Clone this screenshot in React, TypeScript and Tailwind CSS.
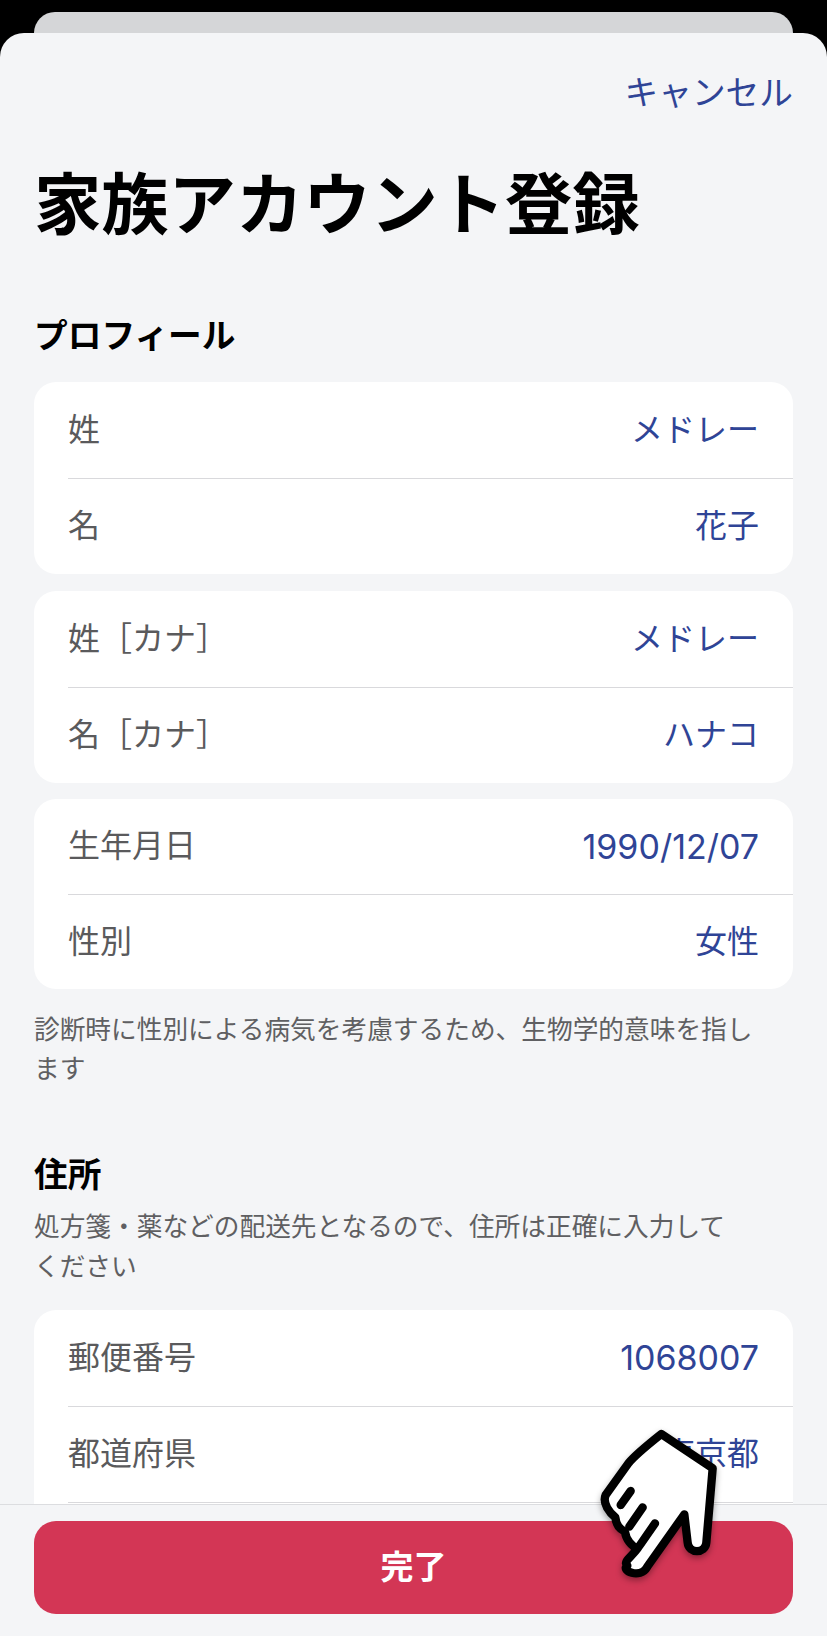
import { Fragment } from 'react';

const sans = 'font-["Inter","Noto_Sans_CJK_JP",sans-serif]';

type Row = { label: string; value: string };

function Card({ rows, rowH = 'h-[95.5px]', more = false }: { rows: Row[]; rowH?: string; more?: boolean }) {
    return (
        <div className="rounded-[22px] bg-white">
            {rows.map((row, i) => (
                <Fragment key={row.label}>
                    {i > 0 && <div className="ml-[34px] h-px bg-[#d9d9dc]" />}
                    <div className={`flex items-center justify-between pl-[34px] pr-[34px] ${rowH}`}>
                        <span className="text-[32px] text-[#5a5a5c]">{row.label}</span>
                        <span className={`${/^\d/.test(row.value) ? 'text-[34px]' : 'text-[32px]'} text-[#2f4496]`}>{row.value}</span>
                    </div>
                </Fragment>
            ))}
            {/* list keeps scrolling under the footer */}
            {more && <div className="ml-[34px] h-[95px] border-t border-[#d9d9dc]" />}
        </div>
    );
}

function HandCursor() {
    return (
        <svg viewBox="0 0 420 540" className="absolute left-[590px] top-[1420px] h-[180px] w-[140px] drop-shadow-[0_3px_3px_rgba(0,0,0,0.35)]">
            <path
                d="M214 42 L368 145 L349 368 C346 402 296 402 293 368 L283 283 L172 440 C150 480 90 450 112 437 C98 425 125 410 143 385 C125 380 108 358 105 335 C90 328 78 312 76 292 C60 280 36 250 47 225 L115 130 C135 105 185 65 214 42 Z"
                fill="#ffffff"
                stroke="#000000"
                strokeWidth="25"
                strokeLinejoin="round"
            />
            <path d="M122 213 L92 255 M158 262 L118 320 M195 310 L148 378" fill="none" stroke="#000000" strokeWidth="25" strokeLinecap="round" />
        </svg>
    );
}

export default function App() {
    return (
        <div className={`relative flex h-[1636px] w-[827px] flex-col overflow-hidden bg-black pt-3 ${sans}`}>
            <div className="mx-[34px] h-[21px] shrink-0 rounded-t-[22px] bg-[#d5d6d8]" />
            <div className="flex min-h-0 flex-1 flex-col rounded-t-[24px] bg-[#f4f5f7]">
                <div className="min-h-0 flex-1 overflow-hidden px-[34px]">
                    <div className="mt-[38px] text-right text-[33.7px] leading-[44px] text-[#2f4496]">キャンセル</div>
                    <h1 className="mt-[48px] text-[67.3px] leading-[84px] font-bold text-black">家族アカウント登録</h1>
                    <h2 className="mt-[67px] text-[33.7px] leading-[44px] font-bold text-black">プロフィール</h2>
                    <div className="mt-[24px] flex flex-col gap-[17px]">
                        <Card rows={[{ label: '姓', value: 'メドレー' }, { label: '名', value: '花子' }]} />
                        <Card rows={[{ label: '姓［カナ］', value: 'メドレー' }, { label: '名［カナ］', value: 'ハナコ' }]} />
                    </div>
                    <div className="mt-[16px]">
                        <Card rowH="h-[94.5px]" rows={[{ label: '生年月日', value: '1990/12/07' }, { label: '性別', value: '女性' }]} />
                    </div>
                    <p className="mt-[22px] w-[730px] text-[25.7px] leading-[38.5px] text-[#5f5f62]">診断時に性別による病気を考慮するため、生物学的意味を指します</p>
                    <h2 className="mt-[65px] text-[33.7px] leading-[44px] font-bold text-black">住所</h2>
                    <p className="mt-[10px] w-[710px] text-[25.7px] leading-[40px] text-[#5f5f62]">処方箋・薬などの配送先となるので、住所は正確に入力してください</p>
                    <div className="mt-[23px]">
                        <Card more rows={[{ label: '郵便番号', value: '1068007' }, { label: '都道府県', value: '東京都' }]} />
                    </div>
                </div>
                <div className="h-[132px] shrink-0 border-t border-[#dcdde0] bg-[#f4f5f7] px-[34px] pt-[16px]">
                    <button className="flex h-[93px] w-full items-center justify-center rounded-[22px] bg-[#d33655] text-[33px] font-bold text-white">完了</button>
                </div>
            </div>
            <HandCursor />
        </div>
    );
}
